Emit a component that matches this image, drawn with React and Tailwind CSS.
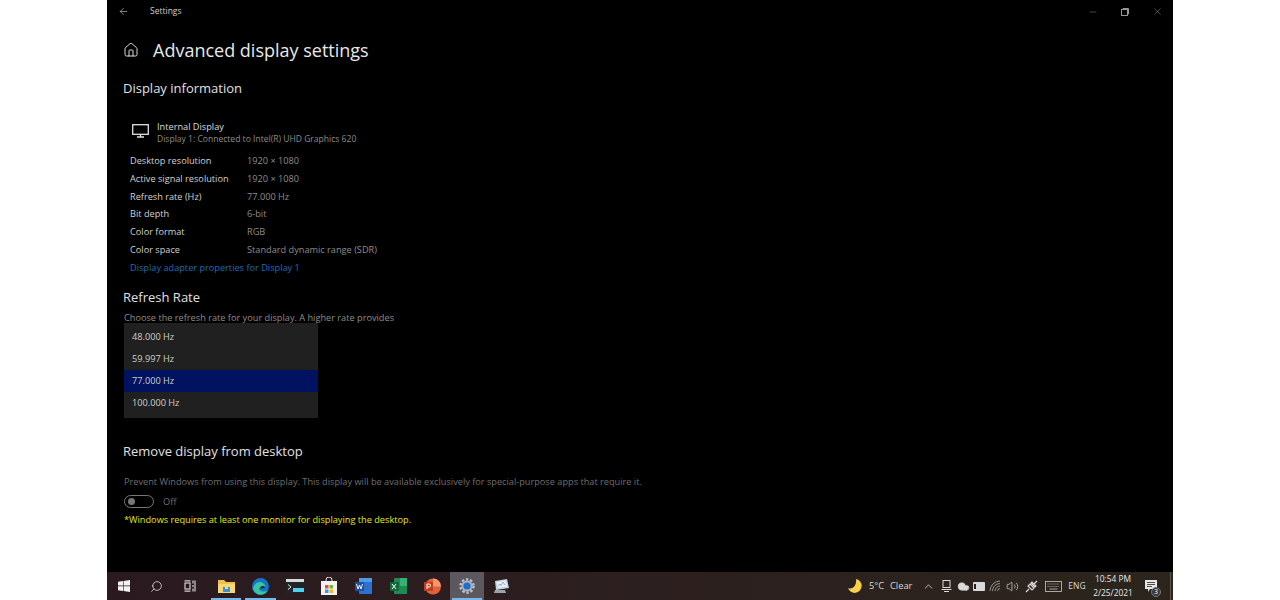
import React from 'react';
import { ArrowLeft, Minus, X, Home, Search, Volume2, ChevronUp, Cloud } from 'lucide-react';

const font = 'font-["Open_Sans","Noto_Sans",sans-serif]';

const infoRows = [
  ['Desktop resolution', '1920 × 1080'],
  ['Active signal resolution', '1920 × 1080'],
  ['Refresh rate (Hz)', '77.000 Hz'],
  ['Bit depth', '6-bit'],
  ['Color format', 'RGB'],
  ['Color space', 'Standard dynamic range (SDR)'],
];

const rates = ['48.000 Hz', '59.997 Hz', '77.000 Hz', '100.000 Hz'];

const TaskSlot = ({ children, underline, active, width = 'w-[34.4px]' }) => (
  <div className={`relative flex items-center justify-center h-full ${width} ${active ? 'bg-[#5d5760]' : ''}`}>
    {children}
    {underline && <div className="absolute bottom-0 left-[2px] right-[2px] h-[2px] bg-[#76b9ed]" />}
  </div>
);

const TraySlot = ({ children, width }) => (
  <div className={`flex items-center justify-center h-full ${width}`}>{children}</div>
);

const Taskbar = () => (
  <div className={`flex items-center h-[28px] bg-gradient-to-r from-[#2a1a20] via-[#2c1f1f] to-[#2b251c] text-[#e6e6e6] ${font}`}>
    <div className="flex items-center h-full">
      <TaskSlot width="w-[33px]">
        <svg width="12" height="12" viewBox="0 0 12 12" fill="#f2f2f2">
          <path d="M0 1.700 5 1v4.600H0zM5.600 .9 12 0v5.600H5.600zM0 6.200h5v4.700l-5-.7zM5.600 6.200H12V12l-6.400-.9z" />
        </svg>
      </TaskSlot>
      <TaskSlot width="w-[33px]"><Search size={13} strokeWidth={1.5} className="-scale-x-100 text-[#d8d8d8]" /></TaskSlot>
      <TaskSlot width="w-[34px] mr-[2px]">
        <svg width="12" height="12" viewBox="0 0 12 12" fill="none" stroke="#cfcfcf" strokeWidth="1.200">
          <path d="M.5 .8h6M.5 11.200h6" />
          <rect x="1" y="3" width="5" height="6" />
          <path d="M9 .5v3M9 5v2M9 8.500v3M11 .5v11" />
        </svg>
      </TaskSlot>
      <TaskSlot underline>
        <svg width="17" height="15" viewBox="0 0 17 15">
          <path d="M0 1h6l2 2h9v11H0z" fill="#f0c04a" />
          <path d="M0 5h17v9H0z" fill="#f7d774" />
          <rect x="5" y="8" width="7" height="5" fill="#3d8fd6" />
          <rect x="7" y="8" width="3" height="2" fill="#f7d774" />
        </svg>
      </TaskSlot>
      <TaskSlot underline>
        <svg width="17" height="17" viewBox="0 0 17 17">
          <circle cx="8.500" cy="8.500" r="8.500" fill="#1773c4" />
          <path d="M1 11C2 5 7 3 10 4.500c3 1.500 4 4 3 5.500H7c0 3 4 4.500 8.500 2.500C13 17 8 18 4.500 15.500 2.500 14.200 1.500 12.500 1 11z" fill="#38c6a2" />
          <path d="M8 10.500c0-2 2-3 4-2.200.8.400 1 1 1 1.700z" fill="#0d2c55" />
        </svg>
      </TaskSlot>
      <TaskSlot>
        <svg width="18" height="14" viewBox="0 0 18 14">
          <rect width="18" height="3" fill="#d9d9d9" />
          <rect y="3" width="18" height="11" fill="#20242b" />
          <path d="M2 5.500 5 8l-3 2.500" fill="none" stroke="#e6e6e6" strokeWidth="1" />
          <rect x="7" y="9" width="11" height="4" fill="#4fd0f0" />
        </svg>
      </TaskSlot>
      <TaskSlot>
        <svg width="16" height="18" viewBox="0 0 16 18">
          <path d="M5 5V3a3 3 0 0 1 6 0v2" fill="none" stroke="#e0e0e0" strokeWidth="1" />
          <rect y="4" width="16" height="14" fill="#f2f2f2" />
          <rect x="4" y="8" width="3.500" height="3.500" fill="#e5532d" />
          <rect x="8.500" y="8" width="3.500" height="3.500" fill="#75b82e" />
          <rect x="4" y="12.500" width="3.500" height="3.500" fill="#2b9fe0" />
          <rect x="8.500" y="12.500" width="3.500" height="3.500" fill="#f6b81c" />
        </svg>
      </TaskSlot>
      <TaskSlot>
        <svg width="17" height="16" viewBox="0 0 17 16">
          <rect x="4" y="0" width="13" height="16" rx="1" fill="#2f6fd0" />
          <rect x="4" y="0" width="13" height="4" rx="1" fill="#4f9be8" />
          <rect x="0" y="4" width="9" height="9" fill="#1c4f9e" />
          <path d="M1.500 6 3 11l1.500-4L6 11l1.500-5" fill="none" stroke="#fff" strokeWidth="0.900" />
        </svg>
      </TaskSlot>
      <TaskSlot>
        <svg width="17" height="16" viewBox="0 0 17 16">
          <rect x="4" y="0" width="13" height="16" rx="1" fill="#1f8a52" />
          <rect x="10" y="0" width="7" height="8" fill="#35b273" />
          <rect x="0" y="4" width="9" height="9" fill="#0f6a3a" />
          <path d="m2 6 4 5M6 6l-4 5" stroke="#fff" strokeWidth="1" />
        </svg>
      </TaskSlot>
      <TaskSlot>
        <svg width="17" height="17" viewBox="0 0 17 17">
          <circle cx="9" cy="8.500" r="8" fill="#e2603a" />
          <path d="M9 .5a8 8 0 0 1 8 8H9z" fill="#f09a6c" />
          <rect x="0" y="4" width="9" height="9" fill="#c23d1e" />
          <path d="M3 11V6h2a1.500 1.500 0 0 1 0 3H3" fill="none" stroke="#fff" strokeWidth="1" />
        </svg>
      </TaskSlot>
      <TaskSlot active underline>
        <svg width="16" height="16" viewBox="0 0 16 16">
          <circle cx="8" cy="8" r="6.500" fill="none" stroke="#b9c0c8" strokeWidth="2.500" strokeDasharray="2.500 1.600" />
          <circle cx="8" cy="8" r="5.500" fill="#a9b1ba" />
          <circle cx="8" cy="8" r="3.600" fill="#1c6fd0" />
        </svg>
      </TaskSlot>
      <TaskSlot>
        <svg width="16" height="15" viewBox="0 0 16 15">
          <path d="M2 2 14 0l2 9-13 2z" fill="#c9d2da" />
          <path d="M3.500 3 13 1.500l1.300 6L5 9z" fill="#e8eef3" />
          <path d="M5 7 7 5l1 1.500L10 3l2 3" fill="none" stroke="#6aa6d8" strokeWidth="0.800" />
          <path d="M2 11h10l1 3H1z" fill="#9aa3ab" />
        </svg>
      </TaskSlot>
    </div>

    <div className="flex-1" />

    {/* system tray */}
    <div className="flex items-center h-full text-[#d9d9d9]">
      <TraySlot width="w-[14px]">
        <svg width="14" height="14" viewBox="0 0 14 14">
          <path d="M8 0a7 7 0 1 1-8 9c4 2 9-2 8-9z" fill="#f7d14a" />
        </svg>
      </TraySlot>
      <span className="ml-[7px] w-[21px] text-[9.300px] whitespace-nowrap">5°C</span>
      <span className="w-[30px] text-[9.300px] whitespace-nowrap">Clear</span>
      <TraySlot width="w-[17px]"><ChevronUp size={13} strokeWidth={1.5} /></TraySlot>
      <TraySlot width="w-[18px]">
        <svg width="11" height="12" viewBox="0 0 11 12" fill="none" stroke="#d9d9d9" strokeWidth="1">
          <rect x="2" y=".5" width="7" height="7" />
          <path d="M.5 9.500h10M3 11.500h5" />
        </svg>
      </TraySlot>
      <TraySlot width="w-[16px]"><Cloud size={13} fill="#d9d9d9" strokeWidth={1} /></TraySlot>
      <TraySlot width="w-[15px]">
        <svg width="12" height="9" viewBox="0 0 12 9">
          <rect width="12" height="9" rx="1" fill="#d9d9d9" />
          <rect x="1" y="2" width="2" height="5" fill="#2b1f1f" />
        </svg>
      </TraySlot>
      <TraySlot width="w-[18px]">
        <svg width="12" height="12" viewBox="0 0 12 12" fill="none" stroke="#9a9a9a" strokeWidth="0.900">
          <path d="M1 11a10 10 0 0 1 10-10M3.500 11A7.500 7.500 0 0 1 11 3.500M6 11a5 5 0 0 1 5-5M8.500 11A2.500 2.500 0 0 1 11 8.500" />
        </svg>
      </TraySlot>
      <TraySlot width="w-[16px]"><Volume2 size={13} strokeWidth={1.3} /></TraySlot>
      <TraySlot width="w-[22px]">
        <svg width="13" height="13" viewBox="0 0 13 13" fill="none" stroke="#d9d9d9" strokeWidth="1.200">
          <path d="m1 12 3-3M9 4l3-3M3 6l4 4 2-2-4-4zM6 3l4 4 1-1-4-4z" />
        </svg>
      </TraySlot>
      <TraySlot width="w-[22px]">
        <svg width="17" height="11" viewBox="0 0 17 11" fill="none" stroke="#c8c8c8" strokeWidth="0.800">
          <rect x=".5" y=".5" width="16" height="10" />
          <path d="M2.500 3h12M2.500 5.500h12" strokeDasharray="1 1" />
          <path d="M4.500 8h8" />
        </svg>
      </TraySlot>
      <TraySlot width="w-[26px]"><span className="text-[8.500px]">ENG</span></TraySlot>
      <div className="flex flex-col items-center justify-center w-[46px] leading-[14px] text-[8.400px] text-[#e6e6e6]">
        <span>10:54 PM</span>
        <span>2/25/2021</span>
      </div>
      <div className="relative flex items-center justify-center w-[30px] h-full">
        <svg width="12" height="13" viewBox="0 0 12 13">
          <path d="M0 0h12v9H5l-2 3V9H0z" fill="#e6e6e6" />
          <path d="M2 2.500h8M2 4.500h8M2 6.500h5" stroke="#2b251c" strokeWidth="0.800" />
        </svg>
        <span className="absolute right-[5px] bottom-[3px] flex items-center justify-center w-[10px] h-[10px] rounded-full bg-[#3a3a3a] border border-[#777] text-[7px] text-white">3</span>
      </div>
      <div className="w-[7px] h-full pl-[4px]">
        <div className="w-[1px] h-full bg-[#5a5550]" />
      </div>
    </div>
  </div>
);

export default function App() {
  return (
    <div className={`flex justify-center h-[600px] bg-white overflow-hidden ${font}`}>
      <div className="flex flex-col w-[1066px] bg-black">
        {/* title bar */}
        <div className="flex items-center h-[23px] text-[#a8a8a8]">
          <ArrowLeft size={11} strokeWidth={1.3} className="ml-[11px] text-[#cfcfcf]" />
          <span className="ml-[21px] text-[8.500px] text-[#cfcfcf]">Settings</span>
          <div className="flex-1" />
          <Minus size={10} strokeWidth={1} className="mr-[23px]" />
          <svg width="8" height="8" viewBox="0 0 8 8" fill="none" stroke="#a8a8a8" strokeWidth="0.900" className="mr-[23px]">
            <rect x=".5" y="1.500" width="6" height="6" />
            <path d="M2 1V.5h5.500V6H7" />
          </svg>
          <X size={11} strokeWidth={1} className="mr-[10px]" />
        </div>

        {/* page */}
        <div className="relative flex-1 pl-[16px] pt-[13px] min-h-0">
          <div className="flex items-center h-[28px]">
            <Home size={16} strokeWidth={1.4} className="text-[#e8e8e8]" />
            <h1 className="ml-[14px] text-[18px] text-[#e8e8e8] whitespace-nowrap">Advanced display settings</h1>
          </div>

          <h2 className="mt-[14px] h-[20px] leading-[20px] text-[13px] text-[#e0e0e0]">Display information</h2>

          <div className="flex items-start mt-[21.500px] ml-[9px]">
            <svg width="17" height="14" viewBox="0 0 17 14" fill="none" stroke="#e0e0e0" strokeWidth="1.300" className="mt-[4px]">
              <rect x=".7" y=".7" width="15.600" height="9.600" />
              <path d="M8.500 10.500v2.500M5 13h7" />
            </svg>
            <div className="ml-[8px]">
              <div className="h-[13px] leading-[13px] text-[9.200px] text-[#dcdcdc]">Internal Display</div>
              <div className="h-[13px] leading-[13px] text-[8.550px] text-[#8c8c8c]">Display 1: Connected to Intel(R) UHD Graphics 620</div>
            </div>
          </div>

          <div className="mt-[6.500px] ml-[7px]">
            {infoRows.map(([label, value]) => (
              <div key={label} className="flex items-center h-[17.800px] text-[9.200px]">
                <span className="w-[117px] text-[#d0d0d0] whitespace-nowrap">{label}</span>
                <span className="text-[#8c8c8c] whitespace-nowrap">{value}</span>
              </div>
            ))}
            <div className="flex items-center h-[18px] text-[9.200px] text-[#1f6bb8]">Display adapter properties for Display 1</div>
          </div>

          <h2 className="mt-[10px] h-[20px] leading-[20px] text-[13px] text-[#e0e0e0]">Refresh Rate</h2>

          <div className="relative mt-[1px] h-[100px]">
            <p className="pt-[3px] text-[9.200px] text-[#8c8c8c] ml-[1px] whitespace-nowrap">Choose the refresh rate for your display. A higher rate provides</p>
            {/* open dropdown */}
            <div className="absolute left-[1px] top-[15px] w-[194px] h-[95px] pt-[3px] bg-[#202020]">
              {rates.map((rate) => (
                <div key={rate} className={`flex items-center h-[22px] pl-[8px] text-[9.200px] text-[#cfcfcf] ${rate === '77.000 Hz' ? 'bg-[#001260]' : ''}`}>{rate}</div>
              ))}
            </div>
          </div>

          <h2 className="mt-[33px] h-[20px] leading-[20px] text-[13px] text-[#e0e0e0]">Remove display from desktop</h2>

          <p className="mt-[14px] h-[14px] leading-[14px] text-[9.200px] text-[#6e6e6e] ml-[1px] whitespace-nowrap">Prevent Windows from using this display. This display will be available exclusively for special-purpose apps that require it.</p>

          <div className="flex items-center mt-[5px] ml-[1px] h-[16px]">
            <div className="flex items-center w-[30px] h-[13px] rounded-full border border-[#777] pl-[3px]">
              <div className="w-[7px] h-[7px] rounded-full bg-[#777]" />
            </div>
            <span className="ml-[9px] text-[9.200px] text-[#6e6e6e]">Off</span>
          </div>

          <p className="mt-[3px] h-[14px] leading-[14px] text-[9.200px] text-[#e6e619] ml-[1px]">*Windows requires at least one monitor for displaying the desktop.</p>
        </div>

        <Taskbar />
      </div>
    </div>
  );
}
